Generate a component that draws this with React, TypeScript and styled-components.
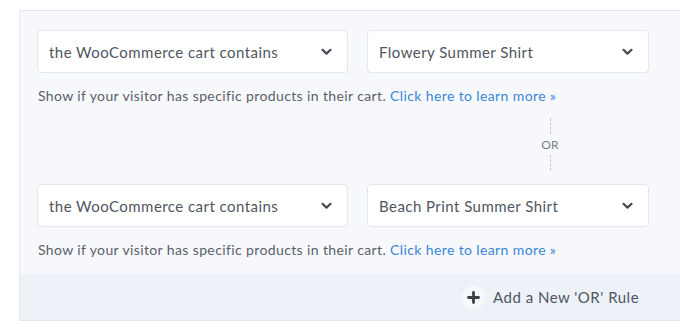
import styled, { createGlobalStyle } from "styled-components";

const GlobalStyle = createGlobalStyle`
  html, body {
    margin: 0;
    padding: 0;
    background: #ffffff;
    overflow: hidden;
  }
  body {
    font-family: Lato, "Open Sans", sans-serif;
  }
`;

type Rule = { condition: string; product: string };

const rules: Rule[] = [
  { condition: "the WooCommerce cart contains", product: "Flowery Summer Shirt" },
  { condition: "the WooCommerce cart contains", product: "Beach Print Summer Shirt" },
];

function Chevron() {
  return (
    <svg width="11" height="8" viewBox="0 0 11 8" aria-hidden>
      <path d="M1.5 1.8 L5.5 5.6 L9.5 1.8" fill="none" stroke="#444b55" strokeWidth="2.2" strokeLinecap="round" strokeLinejoin="round" />
    </svg>
  );
}

function Select({ value, width }: { value: string; width: number }) {
  return (
    <SelectBox $width={width}>
      <span>{value}</span>
      <Chevron />
    </SelectBox>
  );
}

export default function App() {
  return (
    <Page>
      <GlobalStyle />
      <Panel>
        <Body>
          {rules.map((rule, i) => (
            <Group key={i}>
              {i > 0 && (
                <Separator>
                  <DashLine />
                  <OrLabel>OR</OrLabel>
                  <DashLine />
                </Separator>
              )}
              <Row>
                <Select value={rule.condition} width={311} />
                <Select value={rule.product} width={282} />
              </Row>
              <Help>
                Show if your visitor has specific products in their cart.{" "}
                <HelpLink href="#">Click here to learn more »</HelpLink>
              </Help>
            </Group>
          ))}
        </Body>
        <Footer>
          <AddButton>
            <PlusCircle>
              <svg width="13" height="13" viewBox="0 0 13 13" aria-hidden>
                <path d="M6.5 1.5 V11.5 M1.5 6.5 H11.5" stroke="#3b4049" strokeWidth="2.8" strokeLinecap="round" />
              </svg>
            </PlusCircle>
            Add a New 'OR' Rule
          </AddButton>
        </Footer>
      </Panel>
    </Page>
  );
}

const Page = styled.div`
  padding: 10px 0 0 19px;
`;

const Panel = styled.section`
  width: 680px;
  background: #f7f8fc;
  border: 1px solid #e3e8f1;
  border-right: none;
`;

const Body = styled.div`
  padding: 19px 0 16px 17px;
`;

const Group = styled.div`
  display: flex;
  flex-direction: column;
`;

const Row = styled.div`
  display: flex;
  gap: 19px;
`;

const SelectBox = styled.div<{ $width: number }>`
  width: ${p => p.$width}px;
  height: 43px;
  box-sizing: border-box;
  display: flex;
  align-items: center;
  justify-content: space-between;
  padding: 0 15px 0 11px;
  background: #ffffff;
  border: 1px solid #e1e6ef;
  border-radius: 4px;
  font-size: 15px;
  letter-spacing: 0.45px;
  color: #50565f;
`;

const Help = styled.p`
  margin: 14px 0 0 1px;
  font-size: 14px;
  letter-spacing: 0.38px;
  color: #5a6068;
`;

const HelpLink = styled.a`
  color: #3a86d8;
  text-decoration: none;
`;

const Separator = styled.div`
  display: flex;
  flex-direction: column;
  align-items: center;
  width: 30px;
  margin: 14px 0 13px 498px;
`;

const DashLine = styled.div`
  width: 0;
  height: 16px;
  border-left: 1px dashed #c4c9d1;
`;

const OrLabel = styled.span`
  font-size: 12px;
  letter-spacing: 0.3px;
  color: #7b8088;
  margin: 3px 0 3px;
`;

const Footer = styled.div`
  height: 46px;
  background: #edf1f8;
  display: flex;
  align-items: center;
  padding-left: 442px;
`;

const AddButton = styled.button`
  display: flex;
  align-items: center;
  gap: 8px;
  border: none;
  background: none;
  padding: 0;
  font-family: inherit;
  font-size: 15px;
  letter-spacing: 0.5px;
  color: #50565f;
  cursor: pointer;
`;

const PlusCircle = styled.span`
  width: 23px;
  height: 23px;
  border-radius: 50%;
  background: #f7f8fc;
  display: flex;
  align-items: center;
  justify-content: center;
`;
